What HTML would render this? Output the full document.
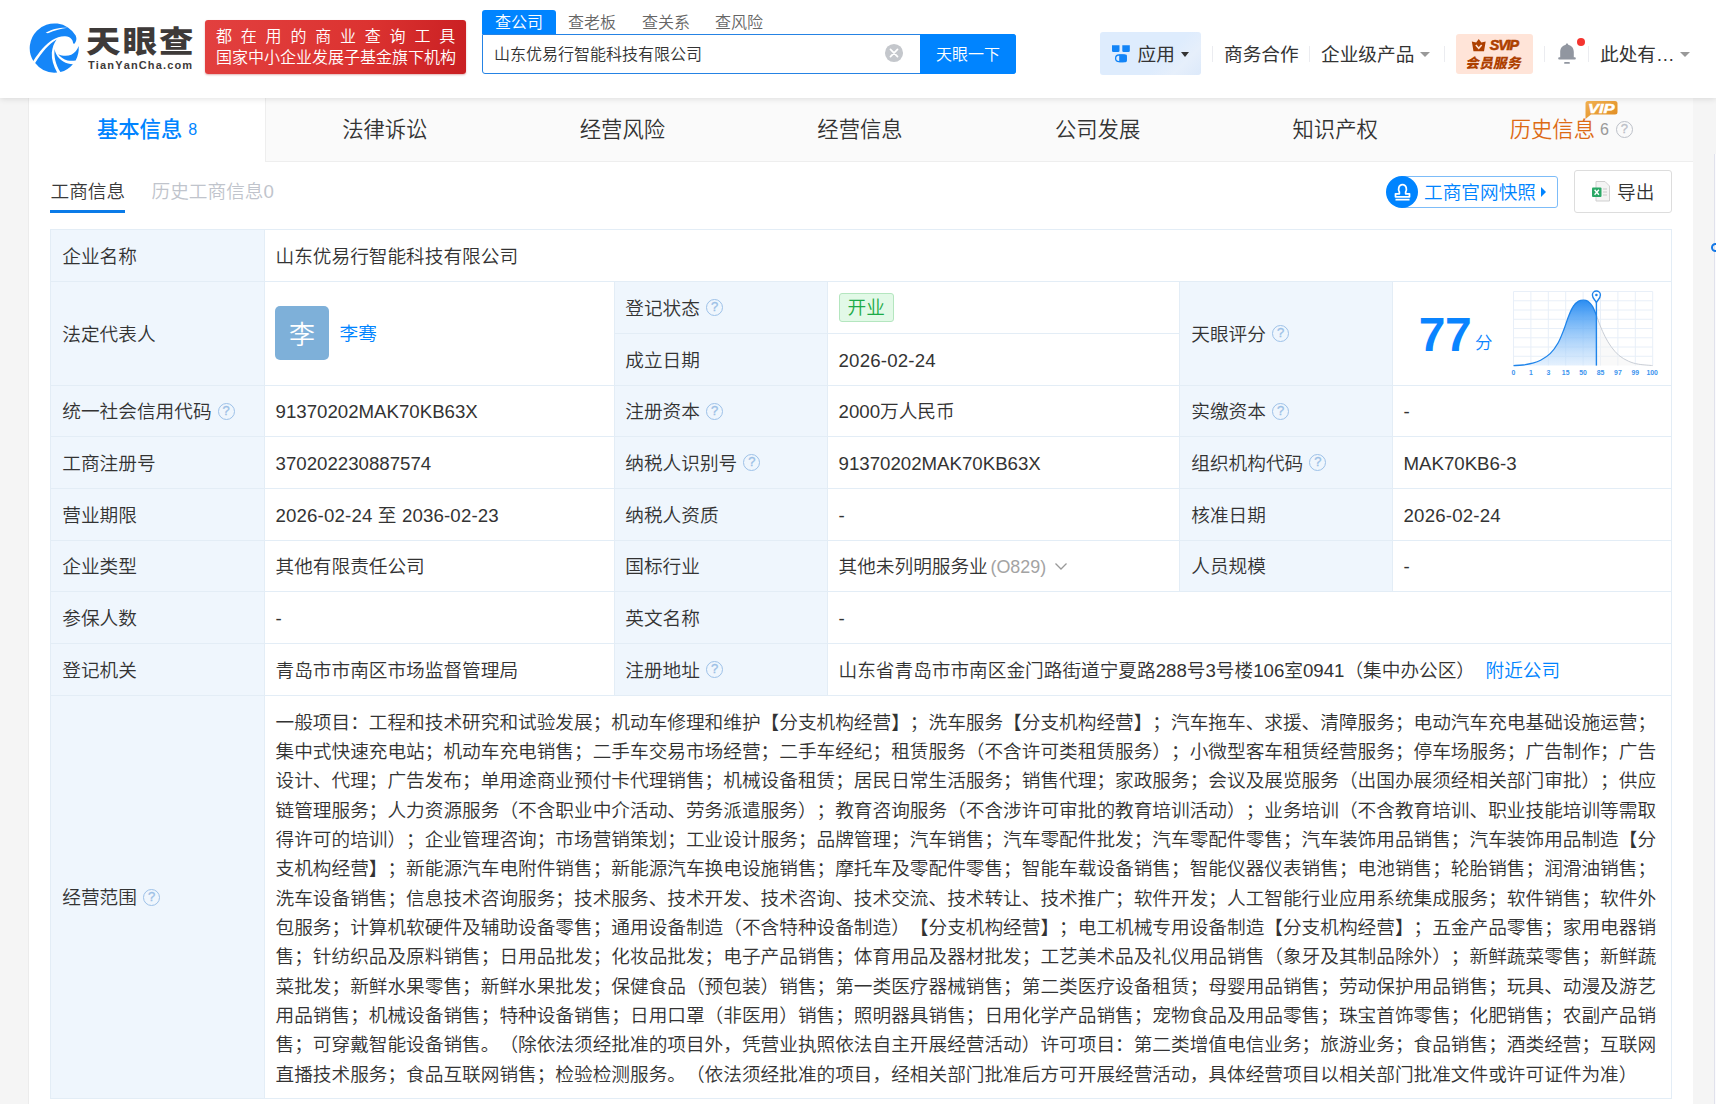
<!DOCTYPE html>
<html lang="zh-CN">
<head>
<meta charset="utf-8">
<title>山东优易行智能科技有限公司 - 天眼查</title>
<style>
*{box-sizing:border-box;margin:0;padding:0}
html,body{width:1716px;height:1104px;overflow:hidden}
body{background:#f5f5f5;font-family:"Liberation Sans","Noto Sans CJK SC",sans-serif;color:#333;font-size:18.67px;font-weight:350;position:relative;font-kerning:none;text-spacing-trim:space-all}
.abs{position:absolute}
/* header */
#hdr{position:absolute;left:0;top:0;width:1716px;height:98px;background:#fff;box-shadow:0 1px 6px rgba(0,0,0,.12);z-index:5}
#logo-txt{position:absolute;left:86px;top:19.700px;font-size:30px;font-weight:900;letter-spacing:1.800px;color:#3e3a39;line-height:44px;white-space:nowrap;transform-origin:0 0;transform:scaleX(1.148)}
#logo-sub{position:absolute;left:88px;top:58px;font-size:11px;font-weight:700;color:#3e3a39;letter-spacing:1.140px;line-height:14px;white-space:nowrap}
#banner{position:absolute;left:205px;top:20px;width:261px;height:54px;border-radius:3px;background:linear-gradient(100deg,#e2403f 0%,#dc3331 60%,#c91f22 100%);color:#fff;font-size:16px;line-height:21.500px;padding:5.500px 0 0 11px;white-space:nowrap;box-shadow:0 1px 2px rgba(150,0,0,.3);overflow:hidden}
#banner .l1{letter-spacing:8.800px}
#banner .l2{letter-spacing:0}
.stab{position:absolute;top:10px;height:24px;line-height:26px;font-size:16px;color:#666;white-space:nowrap}
#stab1{left:482px;width:74px;background:#0084ff;color:#fff;text-align:center;border-radius:3px 3px 0 0}
#sbox{position:absolute;left:482px;top:34px;width:534px;height:40px;border:1.5px solid #2583e4;border-radius:0 3px 3px 3px;background:#fff}
#sbox .t{position:absolute;left:11px;top:0;line-height:39px;font-size:16px;color:#333}
#sbtn{position:absolute;left:920px;top:34px;width:96px;height:40px;background:#0084ff;color:#fff;font-size:16px;line-height:42px;text-align:center;border-radius:0 3px 3px 0}
.nav{position:absolute;font-weight:400;top:42.300px;line-height:26px;font-size:18.67px;color:#333;white-space:nowrap}
.sep{position:absolute;top:46px;width:1px;height:16px;background:#ebecf0}
.caret{position:absolute;width:0;height:0;border-left:5px solid transparent;border-right:5px solid transparent;border-top:5.5px solid #999}
/* panel */
#panel{position:absolute;left:29px;top:98px;width:1664px;height:1006px;background:#fff;box-shadow:-1px 0 0 #ececec}
#tabs{position:absolute;left:0;top:0;width:1664px;height:64px;background:#fafafa;border-bottom:1px solid #eee}
.tab{position:absolute;top:0;margin-left:-0.600px;height:63px;line-height:64.500px;font-size:21.33px;color:#333;text-align:center;width:237.6px;white-space:nowrap}
.tab.on{margin-left:0;background:#fff;color:#0084ff;border-right:1px solid #eee;height:64px}
.tab small{font-size:16px;font-weight:400;position:relative;top:-2.300px}
/* table */
table{position:absolute;left:50px;top:229px;border-collapse:collapse;table-layout:fixed;width:1621px}
td{border:1px solid #e3edf6;height:52px;padding:2.900px 0 0 10.500px;font-size:18.67px;line-height:28px;vertical-align:middle;white-space:nowrap;color:#333}
tr.h51 td{height:51px}
tr.h403 td{height:403px}
td.l{background:#eff6fd;padding-left:11.300px}
td.l3{padding-left:10.300px}
.q{display:inline-block;width:17px;height:17px;border:1.700px solid #9dc1e8;border-radius:50%;color:#9cc0e6;font-size:13px;font-weight:400;line-height:14px;text-align:center;vertical-align:3.700px;margin-left:6.200px;-webkit-text-stroke:.3px #9cc0e6;font-family:"Liberation Sans",sans-serif}
.scope div{text-align:justify;text-align-last:justify;height:29.33px;line-height:29.33px;white-space:nowrap;width:1380px}
.scope div.last{text-align-last:left}
</style>
</head>
<body>
<div id="hdr">
  <svg class="abs" style="left:24px;top:18px" width="60" height="60" viewBox="0 0 1104 1104">
    <g fill="#1586f8">
    <path d="M171.600 792.100 A455 455 0 0 1 238.300 233.300 A455 455 0 0 1 950.600 321.600 C975 380 965 430 928 474 L905 468 C900 400 860 345 760 335 C680 330 600 355 520 405 C400 480 280 620 171.600 792.100 Z"/>
    <path d="M600 395 C470 470 330 620 205 830 A455 455 0 0 0 610 1005 C540 880 505 760 512 640 C520 540 555 455 600 395 Z"/>
    <path d="M565 570 C545 700 580 850 670 995 A455 455 0 0 0 900 850 C780 850 650 790 590 660 C575 630 568 600 565 570 Z"/>
    <path d="M1005 515 A455 455 0 0 1 950 780 C900 792 850 790 800 780 C730 760 670 715 630 665 C700 700 800 705 870 675 C940 640 985 580 1005 515 Z"/>
    </g>
    <path d="M398 272 C500 205 660 172 808 180 C690 195 560 225 440 280 Z" fill="#fff"/>
  </svg>
  <div id="logo-txt">天眼查</div>
  <div id="logo-sub">TianYanCha.com</div>
  <div id="banner"><div class="l1">都在用的商业查询工具</div><div class="l2">国家中小企业发展子基金旗下机构</div></div>

  <div class="stab" id="stab1">查公司</div>
  <div class="stab" style="left:568px">查老板</div>
  <div class="stab" style="left:642px">查关系</div>
  <div class="stab" style="left:715px">查风险</div>
  <div id="sbox"><span class="t">山东优易行智能科技有限公司</span>
    <svg class="abs" style="left:401.300px;top:7.500px" width="20" height="20" viewBox="0 0 21 21"><circle cx="10.5" cy="10.5" r="9.5" fill="#c4c7cc"/><path d="M6.8 6.8 L14.2 14.2 M14.2 6.8 L6.8 14.2" stroke="#fff" stroke-width="1.8" stroke-linecap="round"/></svg>
  </div>
  <div id="sbtn">天眼一下</div>

  <div class="abs" style="left:1100px;top:32px;width:101px;height:43px;border-radius:3px;background:linear-gradient(135deg,#deecfd 0%,#deecfd 62%,#e6effb 80%,#dce9fa 100%)"></div>
  <svg class="abs" style="left:1111px;top:44px" width="20" height="20" viewBox="0 0 20 20">
    <path d="M1 1.300 H8.500 V6.700 Q8.500 8 7.200 8 H2.300 Q1 8 1 6.700 Z" fill="#1284f7"/>
    <path d="M11.300 1.300 H18.800 V6.700 Q18.800 8 17.500 8 H12.600 Q11.300 8 11.300 6.700 Z" fill="#1284f7"/>
    <rect x="4.600" y="11" width="10.600" height="6.600" rx="3.300" fill="none" stroke="#1284f7" stroke-width="1.300"/>
    <path d="M8.200 10.400 H14.500 Q15.900 10.400 15.900 11.800 V16.800 Q15.900 18.200 14.500 18.200 H8.200 Z" fill="#1284f7"/>
  </svg>
  <div class="nav" style="left:1137.500px">应用</div>
  <div class="caret" style="left:1180.500px;top:51.800px;border-top-color:#333;border-left-width:4.500px;border-right-width:4.500px;border-top-width:5px"></div>
  <div class="sep" style="left:1212px"></div>
  <div class="nav" style="left:1224px">商务合作</div>
  <div class="sep" style="left:1309px"></div>
  <div class="nav" style="left:1321px">企业级产品</div>
  <div class="caret" style="left:1420px;top:52px"></div>
  <div class="sep" style="left:1444px"></div>
  <div class="abs" style="left:1456px;top:34px;width:77px;height:40px;border-radius:3px;background:#ffe4d8;color:#ad3f00;font-weight:700;white-space:nowrap">
    <svg class="abs" style="left:14.800px;top:4.800px" width="15.500" height="13" viewBox="0 0 15 13" preserveAspectRatio="none"><path d="M7.500 0 L10 3.500 L14.200 2.500 L12.600 12.300 H2.400 L0.800 2.500 L5 3.500 Z" fill="#ad3f00"/><path d="M4.700 6 L7.500 9.300 L10.300 6" stroke="#ffe4d8" stroke-width="1.500" fill="none"/></svg>
    <div class="abs" style="left:33.800px;top:3.300px;font-size:14.300px;line-height:16px;font-style:italic;letter-spacing:-1.150px;-webkit-text-stroke:.6px #ad3f00">SVIP</div>
    <div class="abs" style="left:10px;top:20.900px;font-size:13.700px;line-height:18px;font-weight:900;letter-spacing:0.300px;transform:skewX(-12deg)">会员服务</div>
  </div>
  <div class="sep" style="left:1544px"></div>
  <svg class="abs" style="left:1557px;top:42px" width="20" height="23" viewBox="0 0 20 23"><path d="M10 1.500 C10.700 1.500 11.200 2 11.200 2.800 C14.800 3.600 16.800 6.500 16.800 10 V16.200 H3.200 V10 C3.200 6.500 5.200 3.600 8.800 2.800 C8.800 2 9.300 1.500 10 1.500 Z" fill="#9196a0"/><rect x="1.200" y="15.300" width="17.600" height="2.100" rx="1" fill="#9196a0"/><rect x="7.100" y="20.100" width="5.800" height="1.700" rx=".85" fill="#9196a0"/></svg>
  <div class="abs" style="left:1577px;top:38px;width:8.200px;height:8.200px;border-radius:50%;background:#f5342f"></div>
  <div class="nav" style="left:1600px">此处有…</div>
  <div class="caret" style="left:1680px;top:52px"></div>
  <div class="sep" style="left:1588px"></div>
</div>

<div id="panel">
  <div id="tabs">
    <div class="tab on" style="left:0;width:237px"><b style="font-weight:500">基本信息</b> <small>8</small></div>
    <div class="tab" style="left:237.6px">法律诉讼</div>
    <div class="tab" style="left:475.2px">经营风险</div>
    <div class="tab" style="left:712.8px">经营信息</div>
    <div class="tab" style="left:950.4px">公司发展</div>
    <div class="tab" style="left:1188px">知识产权</div>
    <div class="tab" style="left:1425.6px;color:#dd6a14;text-align:left;padding-left:55.700px">历史信息 <small style="color:#999;margin-left:-0.900px">6</small><span class="q" style="border-color:#bcc0c8;color:#bcc0c8;-webkit-text-stroke:.3px #bcc0c8;margin-left:6.800px;position:relative;top:-0.300px">?</span></div>
  </div>
</div>

<div class="abs" style="left:1714px;top:154px;width:1px;height:950px;background:#e1e2ec"></div>
<div class="abs" style="left:1715px;top:154px;width:1px;height:950px;background:#fbfbfd"></div>
<div class="abs" style="left:1710.500px;top:242.500px;width:9px;height:9px;border:2px solid #1478e6;border-radius:50%"></div>
<!-- VIP badge -->
<svg class="abs" style="left:1585px;top:100px;z-index:6" width="34" height="20" viewBox="0 0 34 20">
  <defs><linearGradient id="vg" x1="0" y1="0" x2="1" y2="1"><stop offset="0" stop-color="#f0b050"/><stop offset="1" stop-color="#e08a1e"/></linearGradient></defs>
  <path d="M3 1 H30 Q32.500 1 32.500 3.500 V12 Q32.500 14.500 30 14.500 H6 L0.500 19 V3.500 Q0.500 1 3 1 Z" fill="url(#vg)"/>
  <text x="3" y="12.600" font-family="Liberation Sans,sans-serif" font-size="13" font-weight="700" font-style="italic" fill="#fff" stroke="#fff" stroke-width=".5" textLength="26.500" lengthAdjust="spacingAndGlyphs">VIP</text>
</svg>

<!-- sub tabs -->
<div class="abs" style="left:50.500px;top:178.300px;font-size:18.67px;line-height:28px;color:#3a3a3a">工商信息</div>
<div class="abs" style="left:50px;top:209.800px;width:75px;height:2.900px;background:#0a7be8"></div>
<div class="abs" style="left:151.500px;top:178.300px;font-size:18.67px;line-height:28px;color:#c0c4cc">历史工商信息0</div>

<!-- 工商官网快照 -->
<div class="abs" style="left:1400px;top:176px;width:158px;height:32px;border:1px solid #7dbcf8;border-radius:3px;background:#fff"></div>
<div class="abs" style="left:1386px;top:176px;width:32px;height:32px;border-radius:50%;background:#0084ff"></div>
<svg class="abs" style="left:1391.500px;top:180.500px" width="21" height="21" viewBox="0 0 18 18" fill="none" stroke="#fff" stroke-width="1.5"><path d="M6.3 9.500 C5 7.500 5.500 3 9 3 C12.500 3 13 7.500 11.700 9.500 V11 H15 V13.500 H3 V11 H6.300 Z" stroke-linejoin="round"/><path d="M3 16 H15"/></svg>
<div class="abs" style="left:1424px;top:178.500px;font-size:18.67px;line-height:28px;color:#0084ff;white-space:nowrap">工商官网快照</div>
<div class="abs" style="left:1541px;top:187px;width:0;height:0;border-top:5px solid transparent;border-bottom:5px solid transparent;border-left:5.5px solid #0084ff"></div>

<!-- 导出 -->
<div class="abs" style="left:1574px;top:170px;width:98px;height:43px;border:1px solid #ddd;border-radius:3px;background:#fff"></div>
<svg class="abs" style="left:1591px;top:181px" width="19" height="21" viewBox="0 0 19 21">
  <path d="M5 0.500 H14 L18.500 5 V20 H5 Z" fill="#f4f4f4" stroke="#cfcfcf" stroke-width="1"/>
  <path d="M12 8 H16 M12 11 H16 M12 14 H16" stroke="#c8c8c8" stroke-width="1"/>
  <rect x="1" y="6.500" width="9.500" height="9.500" rx="1" fill="#2aa866"/>
  <path d="M3.600 8.800 L7.900 13.700 M7.900 8.800 L3.600 13.700" stroke="#fff" stroke-width="1.400"/>
</svg>
<div class="abs" style="left:1617px;top:178.500px;font-size:18.67px;line-height:28px;color:#333">导出</div>

<table>
<colgroup><col style="width:214px"><col style="width:350px"><col style="width:213px"><col style="width:352px"><col style="width:213px"><col style="width:279px"></colgroup>
<tr class="h52"><td class="l">企业名称</td><td colspan="5">山东优易行智能科技有限公司</td></tr>
<tr class="h52"><td class="l" rowspan="2">法定代表人</td><td rowspan="2" style="position:relative"><span class="abs" style="left:10px;top:24px;width:54px;height:54px;border-radius:5px;background:#7eb0d9;color:#fff;font-size:26px;line-height:58px;text-align:center;overflow:hidden">李</span><span class="abs" style="left:74.500px;top:38px;color:#0084ff">李骞</span></td><td class="l l3">登记状态<span class="q">?</span></td><td><span style="display:inline-block;height:29px;line-height:27px;padding:0 8.100px;border:1px solid #b4e6bf;border-radius:3px;background:#e2f9e7;color:#1cab48;position:relative;top:-1.300px">开业</span></td><td class="l" rowspan="2">天眼评分<span class="q">?</span></td><td rowspan="2" style="position:relative;padding:0" id="score"><span class="abs" style="left:25.700px;top:20.500px;font-size:48px;line-height:64px;font-weight:700;color:#0a84ff;letter-spacing:-0.3px">77</span><span class="abs" style="left:82px;top:49px;font-size:17.5px;line-height:24px;color:#0a84ff">分</span>
<svg class="abs" style="left:114px;top:2px" width="160" height="98" viewBox="-6 -4 160 98">
<defs><linearGradient id="cg" x1="0" y1="0" x2="0" y2="1"><stop offset="0" stop-color="#2b8df2" stop-opacity="1"/><stop offset="0.35" stop-color="#5aa8f6" stop-opacity=".8"/><stop offset="1" stop-color="#cfe5fc" stop-opacity=".55"/></linearGradient></defs>
<g stroke="#e8eff8" stroke-width="1" fill="none">
<path d="M0.5 3.5 V77.5 M17.900 3.500 V77.500 M35.300 3.500 V77.500 M52.700 3.500 V77.500 M70.100 3.500 V77.500 M87.500 3.500 V77.500 M104.900 3.500 V77.500 M122.300 3.500 V77.500 M139.700 3.500 V77.500"/>
<path d="M0.500 3.500 H139.700 M0.500 12.750 H139.700 M0.500 22 H139.700 M0.500 31.250 H139.700 M0.500 40.500 H139.700 M0.500 49.750 H139.700 M0.500 59 H139.700 M0.500 68.250 H139.700"/>
</g>
<path d="M83.4 27.2 C84.0 29.0 85.8 34.4 87.3 38.0 C88.8 41.6 90.4 45.4 92.2 48.8 C94.0 52.2 95.8 55.5 98.1 58.6 C100.3 61.7 103.0 64.9 105.9 67.4 C108.8 69.8 112.4 71.8 115.7 73.3 C118.9 74.7 121.5 75.5 125.5 76.2 C129.5 76.9 137.2 77.3 139.6 77.6 L83.4 77.6 Z" fill="#f2f2f2" fill-opacity=".45"/>
<path d="M83.4 27.2 C84.0 29.0 85.8 34.4 87.3 38.0 C88.8 41.6 90.4 45.4 92.2 48.8 C94.0 52.2 95.8 55.5 98.1 58.6 C100.3 61.7 103.0 64.9 105.9 67.4 C108.8 69.8 112.4 71.8 115.7 73.3 C118.9 74.7 121.5 75.5 125.5 76.2 C129.5 76.9 137.2 77.3 139.6 77.6" fill="none" stroke="#c9ced6" stroke-width="1"/>
<path d="M0.5 77.6 C2.1 77.5 6.7 77.4 9.9 77.0 C13.1 76.6 16.8 76.0 19.7 75.2 C22.7 74.4 24.6 73.9 27.6 72.3 C30.5 70.7 34.4 68.4 37.4 65.4 C40.3 62.5 42.9 58.7 45.2 54.7 C47.5 50.6 49.3 45.5 51.1 41.0 C52.9 36.4 54.3 31.2 56.0 27.2 C57.6 23.3 59.2 19.8 60.9 17.5 C62.5 15.1 64.2 14.0 65.7 13.1 C67.3 12.3 68.8 12.2 70.3 12.2 C71.7 12.2 73.0 12.1 74.6 13.1 C76.1 14.2 78.0 16.1 79.5 18.4 C80.9 20.8 82.7 25.8 83.4 27.2 L83.4 77.6 Z" fill="url(#cg)"/>
<path d="M0.5 77.6 C2.1 77.5 6.7 77.4 9.9 77.0 C13.1 76.6 16.8 76.0 19.7 75.2 C22.7 74.4 24.6 73.9 27.6 72.3 C30.5 70.7 34.4 68.4 37.4 65.4 C40.3 62.5 42.9 58.7 45.2 54.7 C47.5 50.6 49.3 45.5 51.1 41.0 C52.9 36.4 54.3 31.2 56.0 27.2 C57.6 23.3 59.2 19.8 60.9 17.5 C62.5 15.1 64.2 14.0 65.7 13.1 C67.3 12.3 68.8 12.2 70.3 12.2 C71.7 12.2 73.0 12.1 74.6 13.1 C76.1 14.2 78.0 16.1 79.5 18.4 C80.9 20.8 82.7 25.8 83.4 27.2" fill="none" stroke="#1f84ea" stroke-width="1.3"/>
<path d="M83.4 12 V77.6" stroke="#1f84ea" stroke-width="1.4"/>
<path d="M83.400 14.500 C82.400 12 79.400 10.500 79.400 7 A4 4 0 1 1 87.400 7 C87.400 10.500 84.400 12 83.400 14.500 Z" fill="#fff" stroke="#1f84ea" stroke-width="1.400"/>
<circle cx="83.400" cy="7" r="1.300" fill="#1f84ea"/>
<g font-family="Liberation Sans,sans-serif" font-size="6.900" font-weight="700" fill="#3d94ee" text-anchor="middle">
<text x="0.500" y="87">0</text><text x="17.900" y="87">1</text><text x="35.300" y="87">3</text><text x="52.700" y="87">15</text><text x="70.100" y="87">50</text><text x="87.500" y="87">85</text><text x="104.900" y="87">97</text><text x="122.300" y="87">99</text><text x="139.200" y="87">100</text>
</g>
</svg></td></tr>
<tr class="h52"><td class="l l3">成立日期</td><td style="letter-spacing:.2px">2026-02-24</td></tr>
<tr class="h51"><td class="l">统一社会信用代码<span class="q">?</span></td><td>91370202MAK70KB63X</td><td class="l l3">注册资本<span class="q">?</span></td><td>2000万人民币</td><td class="l">实缴资本<span class="q">?</span></td><td>-</td></tr>
<tr class="h52"><td class="l">工商注册号</td><td>370202230887574</td><td class="l l3">纳税人识别号<span class="q">?</span></td><td>91370202MAK70KB63X</td><td class="l">组织机构代码<span class="q">?</span></td><td>MAK70KB6-3</td></tr>
<tr class="h52"><td class="l">营业期限</td><td style="letter-spacing:.15px">2026-02-24 至 2036-02-23</td><td class="l l3">纳税人资质</td><td>-</td><td class="l">核准日期</td><td style="letter-spacing:.2px">2026-02-24</td></tr>
<tr class="h51"><td class="l">企业类型</td><td>其他有限责任公司</td><td class="l l3">国标行业</td><td>其他未列明服务业 <span style="color:#a3a3a3;margin-left:-2.500px;font-size:17.900px">(O829)</span><svg width="14" height="9" viewBox="0 0 14 9" style="margin-left:8px;vertical-align:2px"><path d="M1.500 1.500 L7 7 L12.500 1.500" fill="none" stroke="#999" stroke-width="1.300"/></svg></td><td class="l">人员规模</td><td>-</td></tr>
<tr class="h52"><td class="l">参保人数</td><td>-</td><td class="l l3">英文名称</td><td colspan="3">-</td></tr>
<tr class="h52"><td class="l">登记机关</td><td>青岛市市南区市场监督管理局</td><td class="l l3">注册地址<span class="q">?</span></td><td colspan="3">山东省青岛市市南区金门路街道宁夏路288号3号楼106室0941（集中办公区）<span style="color:#0084ff;margin-left:10.500px">附近公司</span></td></tr>
<tr class="h403"><td class="l">经营范围<span class="q">?</span></td><td colspan="5" class="scope" style="padding-top:2.600px">
<div>一般项目：工程和技术研究和试验发展；机动车修理和维护【分支机构经营】；洗车服务【分支机构经营】；汽车拖车、求援、清障服务；电动汽车充电基础设施运营；</div>
<div>集中式快速充电站；机动车充电销售；二手车交易市场经营；二手车经纪；租赁服务（不含许可类租赁服务）；小微型客车租赁经营服务；停车场服务；广告制作；广告</div>
<div>设计、代理；广告发布；单用途商业预付卡代理销售；机械设备租赁；居民日常生活服务；销售代理；家政服务；会议及展览服务（出国办展须经相关部门审批）；供应</div>
<div>链管理服务；人力资源服务（不含职业中介活动、劳务派遣服务）；教育咨询服务（不含涉许可审批的教育培训活动）；业务培训（不含教育培训、职业技能培训等需取</div>
<div>得许可的培训）；企业管理咨询；市场营销策划；工业设计服务；品牌管理；汽车销售；汽车零配件批发；汽车零配件零售；汽车装饰用品销售；汽车装饰用品制造【分</div>
<div>支机构经营】；新能源汽车电附件销售；新能源汽车换电设施销售；摩托车及零配件零售；智能车载设备销售；智能仪器仪表销售；电池销售；轮胎销售；润滑油销售；</div>
<div>洗车设备销售；信息技术咨询服务；技术服务、技术开发、技术咨询、技术交流、技术转让、技术推广；软件开发；人工智能行业应用系统集成服务；软件销售；软件外</div>
<div>包服务；计算机软硬件及辅助设备零售；通用设备制造（不含特种设备制造）【分支机构经营】；电工机械专用设备制造【分支机构经营】；五金产品零售；家用电器销</div>
<div>售；针纺织品及原料销售；日用品批发；化妆品批发；电子产品销售；体育用品及器材批发；工艺美术品及礼仪用品销售（象牙及其制品除外）；新鲜蔬菜零售；新鲜蔬</div>
<div>菜批发；新鲜水果零售；新鲜水果批发；保健食品（预包装）销售；第一类医疗器械销售；第二类医疗设备租赁；母婴用品销售；劳动保护用品销售；玩具、动漫及游艺</div>
<div>用品销售；机械设备销售；特种设备销售；日用口罩（非医用）销售；照明器具销售；日用化学产品销售；宠物食品及用品零售；珠宝首饰零售；化肥销售；农副产品销</div>
<div>售；可穿戴智能设备销售。（除依法须经批准的项目外，凭营业执照依法自主开展经营活动）许可项目：第二类增值电信业务；旅游业务；食品销售；酒类经营；互联网</div>
<div class="last">直播技术服务；食品互联网销售；检验检测服务。（依法须经批准的项目，经相关部门批准后方可开展经营活动，具体经营项目以相关部门批准文件或许可证件为准）</div>
</td></tr>
</table>
</body>
</html>
